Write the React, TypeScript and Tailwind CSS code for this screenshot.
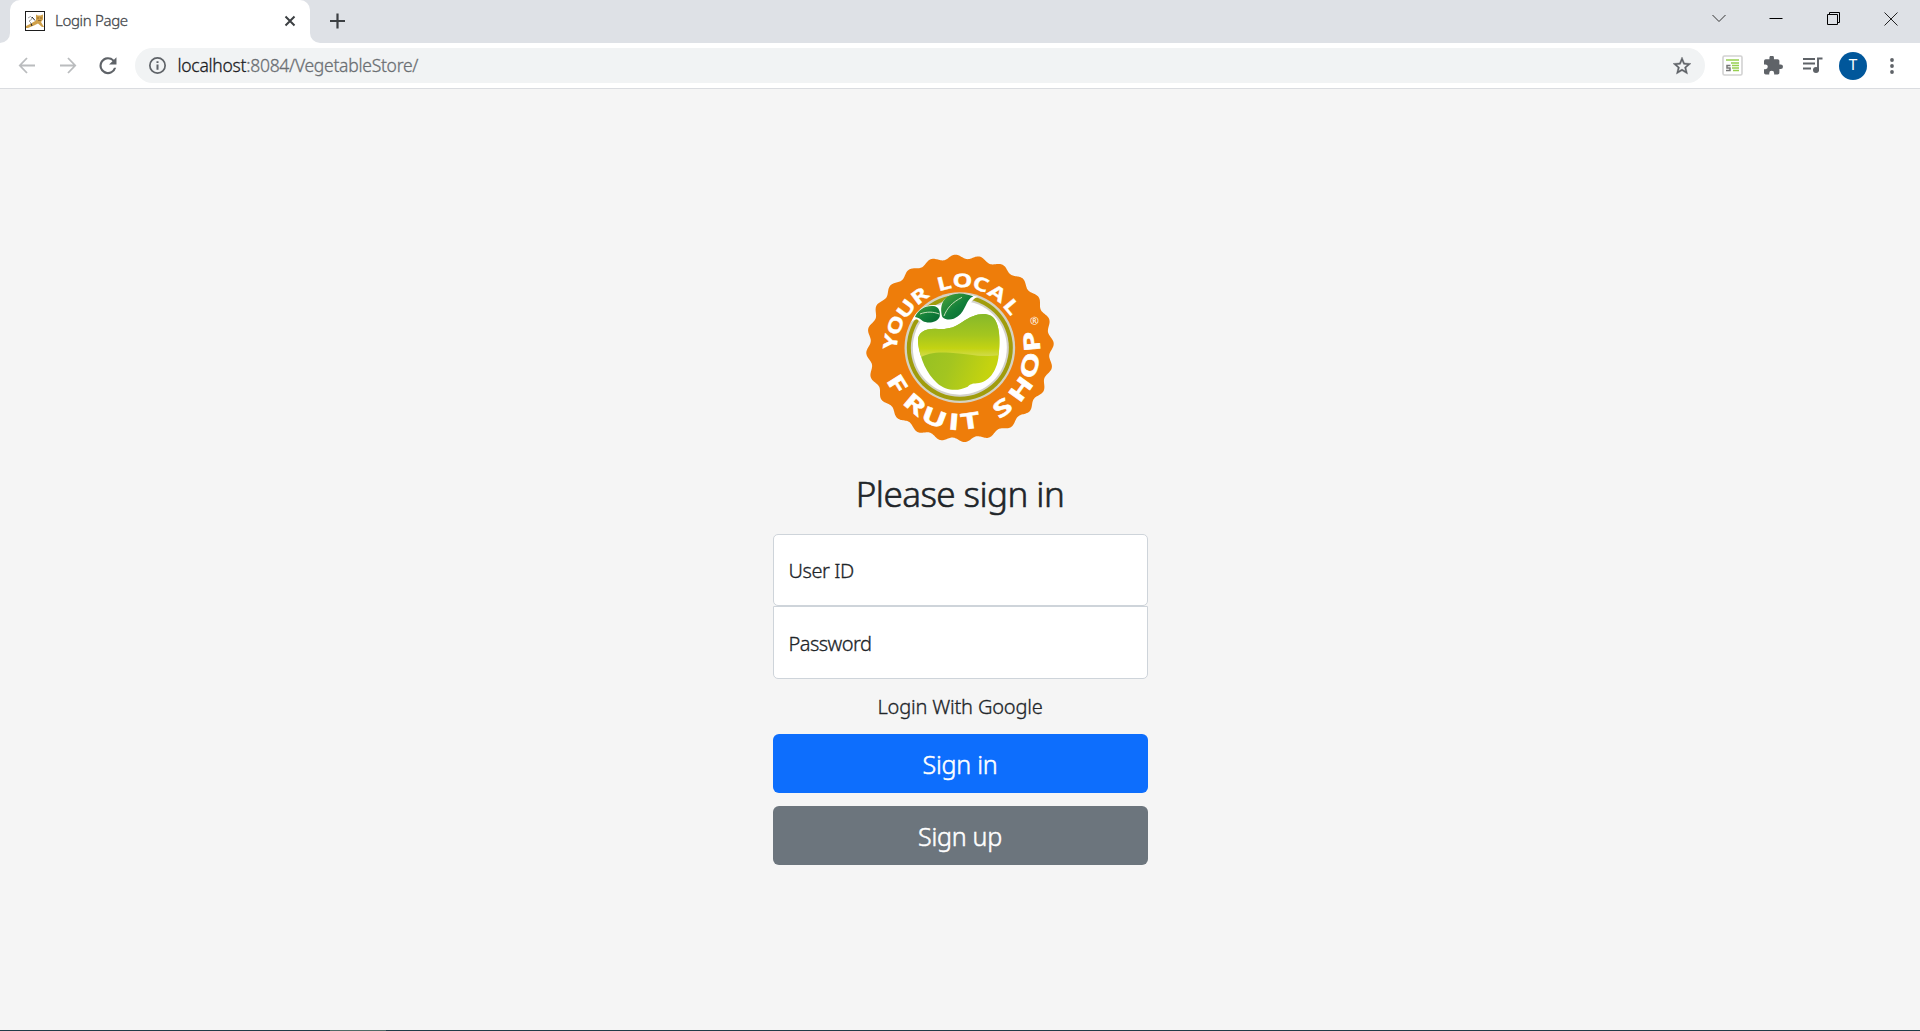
import React from 'react';

const UI = "font-['Noto_Sans','Open_Sans',sans-serif] font-light [-webkit-text-stroke:0.3px]";

function sealPath(cx: number, cy: number, r: number, amp: number, bumps: number, phase: number) {
  const pts: string[] = [];
  for (let i = 0; i < 720; i++) {
    const a = (i / 720) * Math.PI * 2;
    const rr = r + amp * Math.cos(bumps * (a - phase));
    pts.push(`${(cx + rr * Math.sin(a)).toFixed(1)} ${(cy - rr * Math.cos(a)).toFixed(1)}`);
  }
  return `M${pts.join('L')}Z`;
}

// letter, center x, center y, rotation
const TOP: [string, number, number, number][] = [
  ['Y', 107, 290, -81], ['O', 121, 240, -70], ['U', 153, 191, -54], ['R', 194, 152, -37],
  ['L', 267, 114, -14], ['O', 322, 106, 2], ['C', 378, 117, 19], ['A', 427, 144, 34], ['L', 470, 185, 50],
];
const BOTTOM: [string, number, number, number][] = [
  ['F', 127, 417, 58], ['R', 180, 477, 40], ['U', 238, 517, 21], ['I', 297, 530, 5], ['T', 345, 527, -8],
  ['S', 442, 488, -34], ['H', 497, 432, -54], ['O', 525, 361, -76], ['P', 530, 290, -95],
];

function Logo() {
  return (
    <svg viewBox="0 0 630 615" className="block h-[205px] w-[210px] [-webkit-text-stroke:0px]">
      <defs>
        <linearGradient id="appleTop" x1="0" y1="0" x2="0" y2="1">
          <stop offset="0" stopColor="#86b92a" />
          <stop offset="0.5" stopColor="#a5c61e" />
          <stop offset="0.8" stopColor="#c3d312" />
          <stop offset="1" stopColor="#d3dc50" />
        </linearGradient>
        <linearGradient id="appleLow" x1="0" y1="0" x2="1" y2="0.35">
          <stop offset="0" stopColor="#8fbe25" />
          <stop offset="0.55" stopColor="#a3c520" />
          <stop offset="1" stopColor="#c5d30f" />
        </linearGradient>
        <linearGradient id="leaf" x1="0" y1="0" x2="1" y2="1">
          <stop offset="0" stopColor="#4fa53a" />
          <stop offset="0.5" stopColor="#14803a" />
          <stop offset="1" stopColor="#03652f" />
        </linearGradient>
      </defs>
      <path d={sealPath(315, 310, 275, 6.5, 24, -0.052)} fill="#ee7d0a" />
      <circle cx="314.500" cy="308" r="166" fill="#d5d2c3" />
      <circle cx="314.500" cy="308" r="159" fill="#a09c0c" />
      <circle cx="314.500" cy="308" r="147" fill="#d3d2cb" />
      <circle cx="314.500" cy="308" r="141" fill="#fff" />
      <path d="M189 290C187 263 207 251 240 251C276 254 294 250 322 231C352 210 383 200 408 212C438 230 436 296 430 340C424 378 403 412 366 415C350 416 347 418 338 425C308 440 273 438 246 414C216 385 195 345 189 290Z" fill="url(#appleLow)" />
      <path d="M189 290C187 263 207 251 240 251C276 254 294 250 322 231C352 210 383 200 408 212C435 228 436 284 431 331C380 338 330 325 285 323C240 320 216 326 199 336C193 322 190 306 189 290Z" fill="url(#appleTop)" />
      <path d="M169 232C181 196 211 172 257 182C262 158 299 135 369 155C342 163 336 209 307 223C290 234 269 234 255 222C233 242 199 238 186 223C181 223 176 225 169 232Z" fill="#fff" />
      <path d="M180 216C188 194 215 178 240 184C252 188 257 201 254 215C245 234 218 236 203 228C196 221 188 217 180 216Z" fill="url(#leaf)" />
      <path d="M262 216C252 181 264 148 309 146C327 145 340 150 355 154C332 163 333 198 309 214C295 225 275 228 262 216Z" fill="url(#leaf)" />
      <path d="M195 207C216 199 235 200 253 207M267 213C276 190 290 173 321 157" fill="none" stroke="#c4dfb6" strokeWidth="3" />
      <g fill="#fff" textAnchor="middle" className="font-['Open_Sans','Noto_Sans',sans-serif] font-bold">
        {TOP.map(([c, x, y, r], i) => (
          <text key={i} transform={`translate(${x} ${y}) rotate(${r}) scale(1.34 1)`} y="20" fontSize="56" stroke="#fff" strokeWidth="1">{c}</text>
        ))}
        {BOTTOM.map(([c, x, y, r], i) => (
          <text key={i} transform={`translate(${x} ${y}) rotate(${r}) scale(1.48 1)`} y="24" fontSize="67" stroke="#fff" strokeWidth="1.500">{c}</text>
        ))}
        <text transform="translate(538 227) rotate(-4)" y="11" fontSize="32" className="font-medium">®</text>
      </g>
    </svg>
  );
}

function TomcatIcon() {
  return (
    <svg viewBox="0 0 20 20" className="h-5 w-5 shrink-0">
      <rect x=".5" y=".5" width="19" height="19" fill="#fff" stroke="#1d1d1d" />
      <path d="M11 6L11 3.500L12.800 4.500H15.500L18 3.500V8.500L16 11L19 16H17L13 12.500L9 14.500L3 17H1V15L6 12.500L11 9.500Z" fill="#cfa04a" />
      <path d="M3 7Q6 4 7 7Q7 9 4 10M4 10L7 13" fill="none" stroke="#999" strokeWidth=".9" />
      <path d="M7 6L10 9.500M6 12.500L7 15" fill="none" stroke="#222" strokeWidth="1" />
      <path d="M12 7H14M15 7H17M13 9.500H16" stroke="#7b5a26" strokeWidth=".7" />
    </svg>
  );
}

function TabStrip() {
  return (
    <div className="flex h-[43px] items-stretch bg-[#dee1e6]">
      <div className="flex w-[10px] shrink-0 bg-white"><div className="w-full rounded-br-[10px] bg-[#dee1e6]" /></div>
      <div className="flex w-[300px] shrink-0 bg-[#dee1e6]">
        <div className="flex w-full items-center rounded-t-[10px] bg-white pb-[1px] pl-[15px] pr-[14px]">
          <TomcatIcon />
          <span className="ml-[10px] -mt-[2px] text-[15px] tracking-[-0.330px] text-[#45494d]">Login Page</span>
          <svg viewBox="0 0 12 12" className="ml-auto h-3 w-3"><path d="M1.500 1.500L10.500 10.500M10.500 1.500L1.500 10.500" stroke="#3c4043" strokeWidth="2" /></svg>
        </div>
      </div>
      <div className="w-[10px] shrink-0 bg-white"><div className="h-full rounded-bl-[10px] bg-[#dee1e6]" /></div>
      <svg viewBox="0 0 16 16" className="ml-[9px] mt-[13px] h-4 w-4"><path d="M8.500 .5V15.500M1 8H16" stroke="#3c4043" strokeWidth="2.200" /></svg>
      <div className="ml-auto flex pr-[22px] pt-[12px]">
        <svg viewBox="0 0 14 14" className="mr-[43px] h-[14px] w-[14px]"><path d="M.5 3L7 9.500L13.500 3" fill="none" stroke="#333" /></svg>
        <svg viewBox="0 0 14 14" className="mr-[43px] h-[14px] w-[14px]"><path d="M.5 6.500H13.500" stroke="#000" /></svg>
        <svg viewBox="0 0 14 14" className="mr-[44px] h-[14px] w-[14px]"><path d="M1.500 2.500H11.500V12.500H1.500ZM3.500 2.500V.5H13.500V10.500H11.500" fill="none" stroke="#000" /></svg>
        <svg viewBox="0 0 14 14" className="h-[14px] w-[14px]"><path d="M.5 .5L13.500 13.500M13.500 .5L.5 13.500" stroke="#222" /></svg>
      </div>
    </div>
  );
}

function Toolbar() {
  return (
    <div className="flex h-[46px] items-center border-b border-[#dadce0] bg-white pl-[18px] pr-[18px]">
      <svg viewBox="0 0 18 18" className="h-[18px] w-[18px]"><path d="M17 8.500H2.500M9 1L1.800 8.500L9 16" fill="none" stroke="#babcbe" strokeWidth="1.800" /></svg>
      <svg viewBox="0 0 18 18" className="ml-[23px] h-[18px] w-[18px]"><path d="M1 8.500H15.500M9 1L16.200 8.500L9 16" fill="none" stroke="#babcbe" strokeWidth="1.800" /></svg>
      <svg viewBox="3.500 3.800 17 17" className="ml-[22px] h-[18px] w-[18px]"><path fill="#5f6368" d="M17.650 6.350A8 8 0 1 0 19.730 14h-2.080A6 6 0 1 1 12 6c1.660 0 3.140.69 4.220 1.780L13 11h7V4z" /></svg>
      <div className="ml-[18px] flex h-[35px] w-[1570px] items-center rounded-full bg-[#f1f3f4] pl-[14px] pr-[14px]">
        <svg viewBox="0 0 16 16" className="h-[17px] w-[17px]"><circle cx="8" cy="8" r="7.200" fill="none" stroke="#5f6368" strokeWidth="1.600" /><path d="M8 7V12M8 4V5.700" stroke="#5f6368" strokeWidth="1.900" /></svg>
        <span className="ml-[11.500px] text-[17.500px] tracking-[-0.270px] text-[#6b6f73]"><span className="text-[#202124]">localhost</span>:8084/VegetableStore/</span>
        <svg viewBox="2 2 20 20" className="ml-auto h-[18px] w-[18px]"><path fill="#5f6368" stroke="#5f6368" strokeWidth=".4" d="M22 9.240l-7.190-.62L12 2 9.190 8.630 2 9.240l5.460 4.730L5.820 21 12 17.270 18.180 21l-1.630-7.030zM12 15.400l-3.760 2.270 1-4.280-3.320-2.880 4.380-.38L12 6.100l1.710 4.040 4.380.38-3.320 2.880 1 4.280z" /></svg>
      </div>
      <svg viewBox="0 0 21 21" className="ml-[17px] h-[21px] w-[21px]">
        <rect x="1" y="1" width="19" height="19" rx="1.500" fill="#fff" stroke="#d2d2d2" strokeWidth="1.600" />
        <path d="M4 5H17M9 8H17M10 10.500H17M10 13H17M11 15.500H17" stroke="#97cf50" strokeWidth="1.700" />
        <path d="M8.500 10.500H5V13H8V15.500H4" fill="none" stroke="#777" strokeWidth="1.500" />
      </svg>
      <svg viewBox="2 1.500 21 21" className="ml-[21px] h-[19px] w-[19px]"><path fill="#5f6368" d="M20.500 11H19V7a2 2 0 0 0-2-2h-4V3.500a2.500 2.500 0 0 0-5 0V5H4a2 2 0 0 0-2 2v3.800h1.500a2.700 2.700 0 0 1 0 5.400H2V20a2 2 0 0 0 2 2h3.800v-1.500a2.700 2.700 0 0 1 5.400 0V22H17a2 2 0 0 0 2-2v-4h1.500a2.500 2.500 0 0 0 0-5z" /></svg>
      <svg viewBox="0 0 20 17" className="ml-[20px] h-[17px] w-5"><path d="M0 2H12M0 6.500H12M0 11.500H8M15 14V1.500H19.500" fill="none" stroke="#5f6368" strokeWidth="1.900" /><circle cx="13" cy="13" r="3" fill="#5f6368" /></svg>
      <div className="ml-[16px] flex h-7 w-7 items-center justify-center rounded-full bg-[#01579b] font-[Roboto] text-[15px] font-normal text-white [-webkit-text-stroke:0px]">T</div>
      <svg viewBox="0 0 4 16" className="ml-[23px] h-4 w-1"><g fill="#5f6368"><circle cx="2" cy="2" r="1.900" /><circle cx="2" cy="8" r="1.900" /><circle cx="2" cy="14" r="1.900" /></g></svg>
    </div>
  );
}

export default function App() {
  return (
    <div className={`flex h-[1031px] w-[1920px] flex-col overflow-hidden bg-[#f5f5f5] ${UI}`}>
      <TabStrip />
      <Toolbar />
      <main className="flex flex-1 flex-col items-center pt-[156px] text-[#212529]">
        <Logo />
        <h1 className="mt-[23px] mb-px whitespace-nowrap text-[35px] leading-[42px] tracking-[-0.550px] [-webkit-text-stroke:0.6px]">Please sign in</h1>
        <form className="mt-[18px] flex w-[375px] flex-col">
          <div className="flex h-[72px] items-center rounded-[5px] border border-[#ced4da] bg-white px-[15px] pt-[2px] text-[20px] tracking-[-0.450px]">User ID</div>
          <div className="flex h-[73px] items-center rounded-b-[5px] border border-[#ced4da] bg-white px-[15px] pt-[2px] text-[20px] tracking-[-0.550px]">Password</div>
          <div className="mt-[13px] text-center text-[20px] leading-[30px] tracking-[-0.180px]">Login With Google</div>
          <button type="button" className="mt-[12px] h-[59px] rounded-[6px] bg-[#0d6efd] pt-[2px] text-[25px] tracking-[-0.250px] text-white [-webkit-text-stroke:0.5px]">Sign in</button>
          <button type="button" className="mt-[13px] h-[59px] rounded-[6px] bg-[#6c757d] pt-[2px] text-[25px] tracking-[-0.250px] text-white [-webkit-text-stroke:0.5px]">Sign up</button>
        </form>
      </main>
      <footer className="flex h-px bg-[#203c48]"><div className="ml-[330px] w-[56px] bg-[#4f6a66]" /></footer>
    </div>
  );
}
